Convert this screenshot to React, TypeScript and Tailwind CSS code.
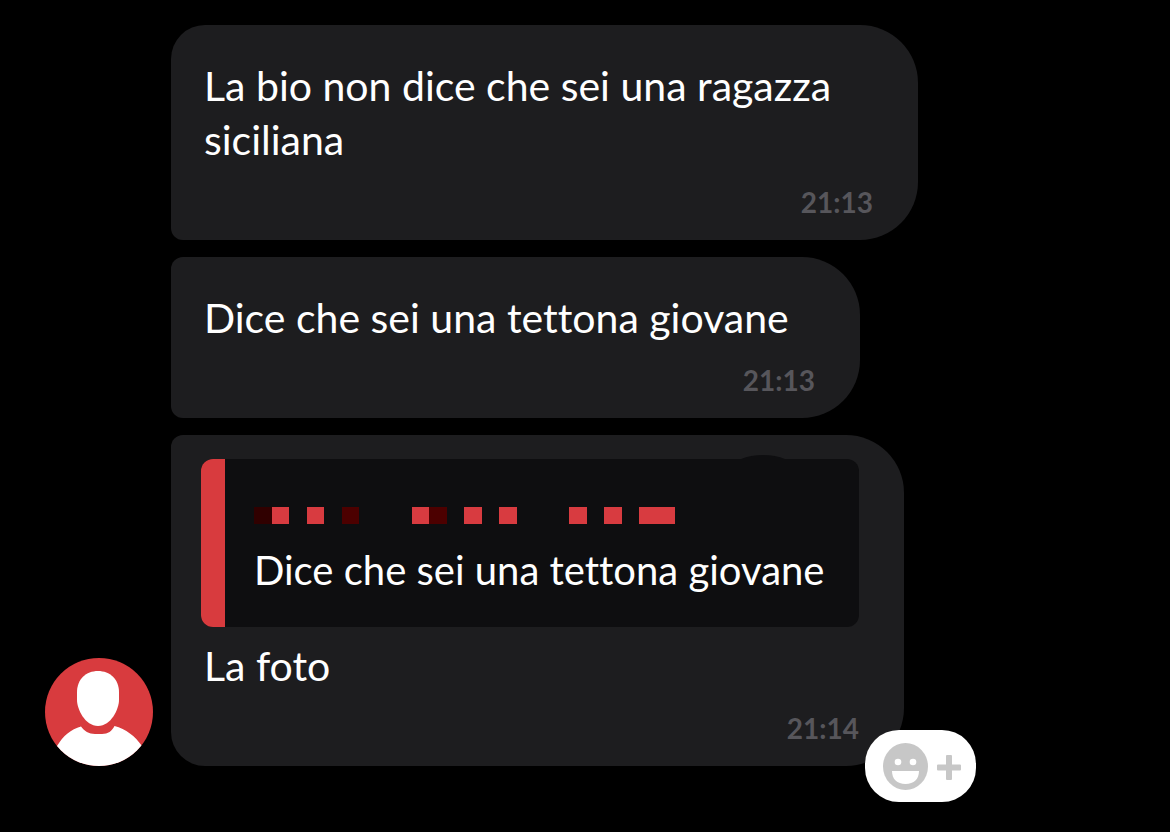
import { ReactNode } from "react";
import clsx from "clsx";

interface BubbleProps {
  time: string;
  className?: string;
  children: ReactNode;
}

interface Block {
  x: number;
  width: number;
  color: string;
}

// Censored sender name, drawn as mosaic blocks
const blocks: Block[] = [
  { x: 0, width: 18, color: "#300000" },
  { x: 18, width: 17, color: "#d83b40" },
  { x: 53, width: 17, color: "#d83b40" },
  { x: 88, width: 17, color: "#4c0000" },
  { x: 158, width: 17, color: "#d83b40" },
  { x: 175, width: 18, color: "#4c0000" },
  { x: 210, width: 18, color: "#d83b40" },
  { x: 245, width: 18, color: "#d83b40" },
  { x: 315, width: 18, color: "#d83b40" },
  { x: 350, width: 18, color: "#d83b40" },
  { x: 385, width: 36, color: "#d83b40" },
];

const Bubble = ({ time, className, children }: BubbleProps) => (
  <article
    className={clsx(
      "relative flex w-full flex-col bg-[#1d1d1f] pb-5",
      className
    )}
  >
    {children}
    <time className="mt-[17px] mr-[45px] self-end text-[28px] leading-9 font-bold text-[#57565b]">
      {time}
    </time>
  </article>
);

const Avatar = () => (
  <svg
    viewBox="0 0 108 108"
    className="h-[108px] w-[108px] shrink-0"
    role="img"
    aria-label="Avatar"
  >
    <defs>
      <clipPath id="avatar-circle">
        <circle cx="54" cy="54" r="54" />
      </clipPath>
    </defs>
    <g clipPath="url(#avatar-circle)">
      <rect width="108" height="108" fill="#d83b3e" />
      <path
        d="M53 13C65 13 74 21.500 74 34V42C74 51 66 68 53 68S32 51 32 42V34C32 21.500 41 13 53 13Z"
        fill="#fff"
      />
      <path
        d="M12 88C18 78 26 71 36 68.500C39 73 44 76 50 76H57C63 76 67 73 69.500 68C81 71 90 78 97 88V108H12Z"
        fill="#fff"
      />
    </g>
  </svg>
);

const ReactionButton = () => (
  <button
    type="button"
    aria-label="Add reaction"
    className="absolute -right-[72px] -bottom-9 flex h-[72px] w-[111px] items-center gap-[9px] rounded-[34px] bg-white pl-[18px]"
  >
    <svg viewBox="0 0 45 47" className="h-[47px] w-[45px]">
      <ellipse cx="22.500" cy="23.500" rx="22.500" ry="23.500" fill="#c7c7c7" />
      <circle cx="15" cy="19" r="3.300" fill="#fff" />
      <circle cx="30" cy="19" r="3.300" fill="#fff" />
      <path d="M9 28H36C36 36 31 41 22.500 41S9 36 9 28Z" fill="#fff" />
    </svg>
    <svg viewBox="0 0 24 25" className="mt-[3px] h-[25px] w-6">
      <path
        d="M10 0H14Q15 0 15 1V9.500H23Q24 9.500 24 10.500V14.500Q24 15.500 23 15.500H15V24Q15 25 14 25H10Q9 25 9 24V15.500H1Q0 15.500 0 14.500V10.500Q0 9.500 1 9.500H9V1Q9 0 10 0Z"
        fill="#c7c7c7"
      />
    </svg>
  </button>
);

const Quote = () => (
  <blockquote className="relative mr-[45px] ml-[30px] flex rounded-xl bg-[#0e0e10]">
    <svg
      viewBox="0 0 44 4"
      className="absolute -top-1 right-[74px] h-1 w-11"
      aria-hidden="true"
    >
      <path d="M0 4C12 -1.300 32 -1.300 44 4Z" fill="#0e0e10" />
    </svg>
    <div className="w-6 shrink-0 rounded-l-xl bg-[#d83b3e]" />
    <div className="pt-12 pb-[30px] pl-[29px]">
      <svg
        viewBox="0 0 421 17"
        className="mb-[19px] h-[17px] w-[421px] max-w-full"
        shapeRendering="crispEdges"
        aria-hidden="true"
      >
        {blocks.map((block) => (
          <rect
            key={block.x}
            x={block.x}
            width={block.width}
            height="17"
            fill={block.color}
          />
        ))}
      </svg>
      <p className="text-[40px] leading-[54px]">
        Dice che sei una tettona giovane
      </p>
    </div>
  </blockquote>
);

const App = () => {
  return (
    <main className="min-h-screen bg-black pt-[25px] pr-6 pb-16 pl-[45px] font-['Lato',sans-serif] text-white [font-variant-ligatures:none]">
      <div className="flex items-end gap-[18px]">
        <Avatar />
        <div className="flex min-w-0 flex-1 flex-col gap-[17px]">
          <Bubble
            time="21:13"
            className="max-w-[747px] rounded-[58px] rounded-tl-[34px] rounded-bl-xl pt-[34px]"
          >
            <p className="px-[33px] text-[41px] leading-[54px]">
              La bio non dice che sei una ragazza siciliana
            </p>
          </Bubble>
          <Bubble
            time="21:13"
            className="max-w-[689px] rounded-r-[58px] rounded-l-xl pt-[34px]"
          >
            <p className="px-[33px] text-[41px] leading-[54px]">
              Dice che sei una tettona giovane
            </p>
          </Bubble>
          <Bubble
            time="21:14"
            className="max-w-[733px] rounded-[58px] rounded-tl-xl rounded-bl-[34px] pt-6"
          >
            <Quote />
            <p className="mt-3 px-[33px] text-[41px] leading-[54px]">La foto</p>
            <ReactionButton />
          </Bubble>
        </div>
      </div>
    </main>
  );
};

export default App;
